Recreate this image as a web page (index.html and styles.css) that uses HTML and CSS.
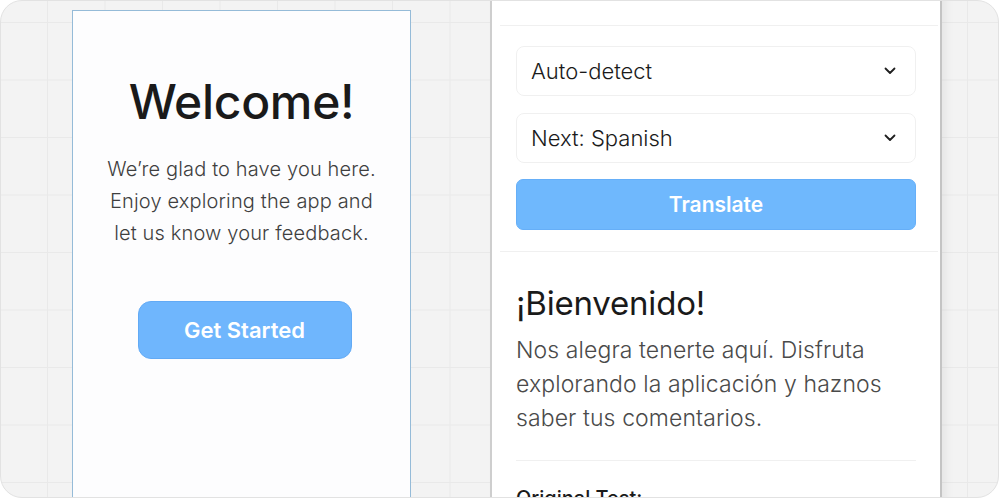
FILE: index.html
```html
<!DOCTYPE html>
<html lang="en">
<head>
<meta charset="utf-8">
<title>Welcome / Translate</title>
<link rel="stylesheet" href="styles.css">
</head>
<body>
<div class="canvas">
  <div class="frame-col">
    <div class="frame-label">Frame 1</div>
    <div class="frame">
      <h1 class="welcome-title">Welcome!</h1>
      <p class="welcome-text">We’re glad to have you here.<br>Enjoy exploring the app and<br>let us know your feedback.</p>
      <button class="start-btn">Get Started</button>
    </div>
  </div>

  <div class="panel">
    <div class="panel-head"></div>
    <div class="panel-form">
      <div class="select">
        <span>Auto-detect</span>
        <svg class="chev" width="12" height="8" viewBox="0 0 12 8"><polyline points="1.5,1.5 6,6 10.5,1.5" fill="none" stroke="#1f1f1f" stroke-width="1.8" stroke-linecap="round" stroke-linejoin="round"/></svg>
      </div>
      <div class="select">
        <span>Next: Spanish</span>
        <svg class="chev" width="12" height="8" viewBox="0 0 12 8"><polyline points="1.5,1.5 6,6 10.5,1.5" fill="none" stroke="#1f1f1f" stroke-width="1.8" stroke-linecap="round" stroke-linejoin="round"/></svg>
      </div>
      <button class="translate-btn">Translate</button>
    </div>
    <div class="panel-divider"></div>
    <div class="panel-result">
      <h2 class="result-title">¡Bienvenido!</h2>
      <p class="result-text">Nos alegra tenerte aquí. Disfruta<br>explorando la aplicación y haznos<br>saber tus comentarios.</p>
      <div class="result-divider"></div>
      <h3 class="orig-title">Original Test:</h3>
    </div>
  </div>
</div>
</body>
</html>
```

FILE: styles.css
```css
* { box-sizing: border-box; }

html, body {
  margin: 0;
  padding: 0;
  background: #ffffff;
  font-family: Inter, "Noto Sans", "Liberation Sans", sans-serif;
}

body {
  width: 1000px;
  height: 500px;
  overflow: hidden;
}

.canvas {
  width: 999px;
  height: 498px;
  border: 1px solid #e2e2e2;
  border-radius: 22px;
  overflow: hidden;
  background-color: #f3f3f3;
  background-image:
    linear-gradient(to right, #e9e9e9 1px, transparent 1px),
    linear-gradient(to bottom, #e9e9e9 1px, transparent 1px);
  background-size: 57.5px 57.5px;
  background-position: 46px 21px;
  display: flex;
  align-items: flex-start;
  padding-left: 71px;
}

/* Left frame */
.frame-col {
  display: flex;
  flex-direction: column;
  margin-top: -14px;
}

.frame-label {
  font-size: 13px;
  line-height: 16px;
  color: #8ea6c2;
  padding-left: 2px;
}

.frame {
  margin-top: 7px;
  width: 339px;
  height: 520px;
  border: 1px solid #95bbd8;
  background: #fdfdfe;
  display: flex;
  flex-direction: column;
  align-items: center;
  padding-top: 62px;
}

.welcome-title {
  margin: 0;
  font-size: 48px;
  line-height: 58px;
  font-weight: 500;
  color: #1a1a1a;
  letter-spacing: -0.3px;
}

.welcome-text {
  margin: 22px 0 0;
  font-size: 20px;
  line-height: 32px;
  font-weight: 300;
  color: #3f3f3f;
  text-align: center;
  letter-spacing: 0.15px;
}

.start-btn {
  margin-top: 52px;
  margin-left: 6px;
  width: 214px;
  height: 58px;
  border: 1px solid #62aaf5;
  border-radius: 13px;
  background: #6fb6fd;
  color: #ffffff;
  font-family: inherit;
  font-size: 22px;
  font-weight: 600;
}

/* Right panel */
.panel {
  margin-left: 79px;
  margin-top: -20px;
  width: 452px;
  height: 560px;
  background: #ffffff;
  border-left: 2px solid #cecece;
  border-right: 2px solid #c4c4c4;
  box-shadow: 5px 0 8px rgba(0, 0, 0, 0.05);
}

.panel-head {
  height: 45px;
  margin: 0 2px 0 8px;
  border-bottom: 1px solid #f0f0f0;
}

.panel-form {
  padding: 20px 24px 21px;
  display: flex;
  flex-direction: column;
}

.select {
  height: 50px;
  border: 1px solid #f0f0f0;
  border-radius: 8px;
  display: flex;
  align-items: center;
  justify-content: space-between;
  padding: 0 19px 0 14px;
  font-size: 22px;
  font-weight: 300;
  color: #1a1a1a;
}

.select + .select {
  margin-top: 17px;
}

.chev {
  display: block;
}

.translate-btn {
  margin-top: 16px;
  height: 51px;
  border: 1px solid #66aff8;
  border-radius: 7px;
  background: #6fb8fd;
  color: #ffffff;
  font-family: inherit;
  font-size: 21px;
  font-weight: 600;
  padding-left: 6px;
}

.panel-divider {
  height: 1px;
  margin: 0 2px 0 8px;
  background: #f0f0f0;
}

.panel-result {
  padding: 0 24px;
}

.result-title {
  margin: 32px 0 0;
  font-size: 33px;
  line-height: 38px;
  font-weight: 400;
  color: #1a1a1a;
  letter-spacing: -0.2px;
}

.result-text {
  margin: 11px 0 0;
  font-size: 23px;
  line-height: 34px;
  font-weight: 300;
  color: #4a4a4a;
  letter-spacing: 0.1px;
}

.result-divider {
  margin-top: 25px;
  height: 1px;
  background: #f0f0f0;
}

.orig-title {
  margin: 25px 0 0;
  font-size: 20px;
  line-height: 24px;
  font-weight: 500;
  color: #1a1a1a;
}
```
